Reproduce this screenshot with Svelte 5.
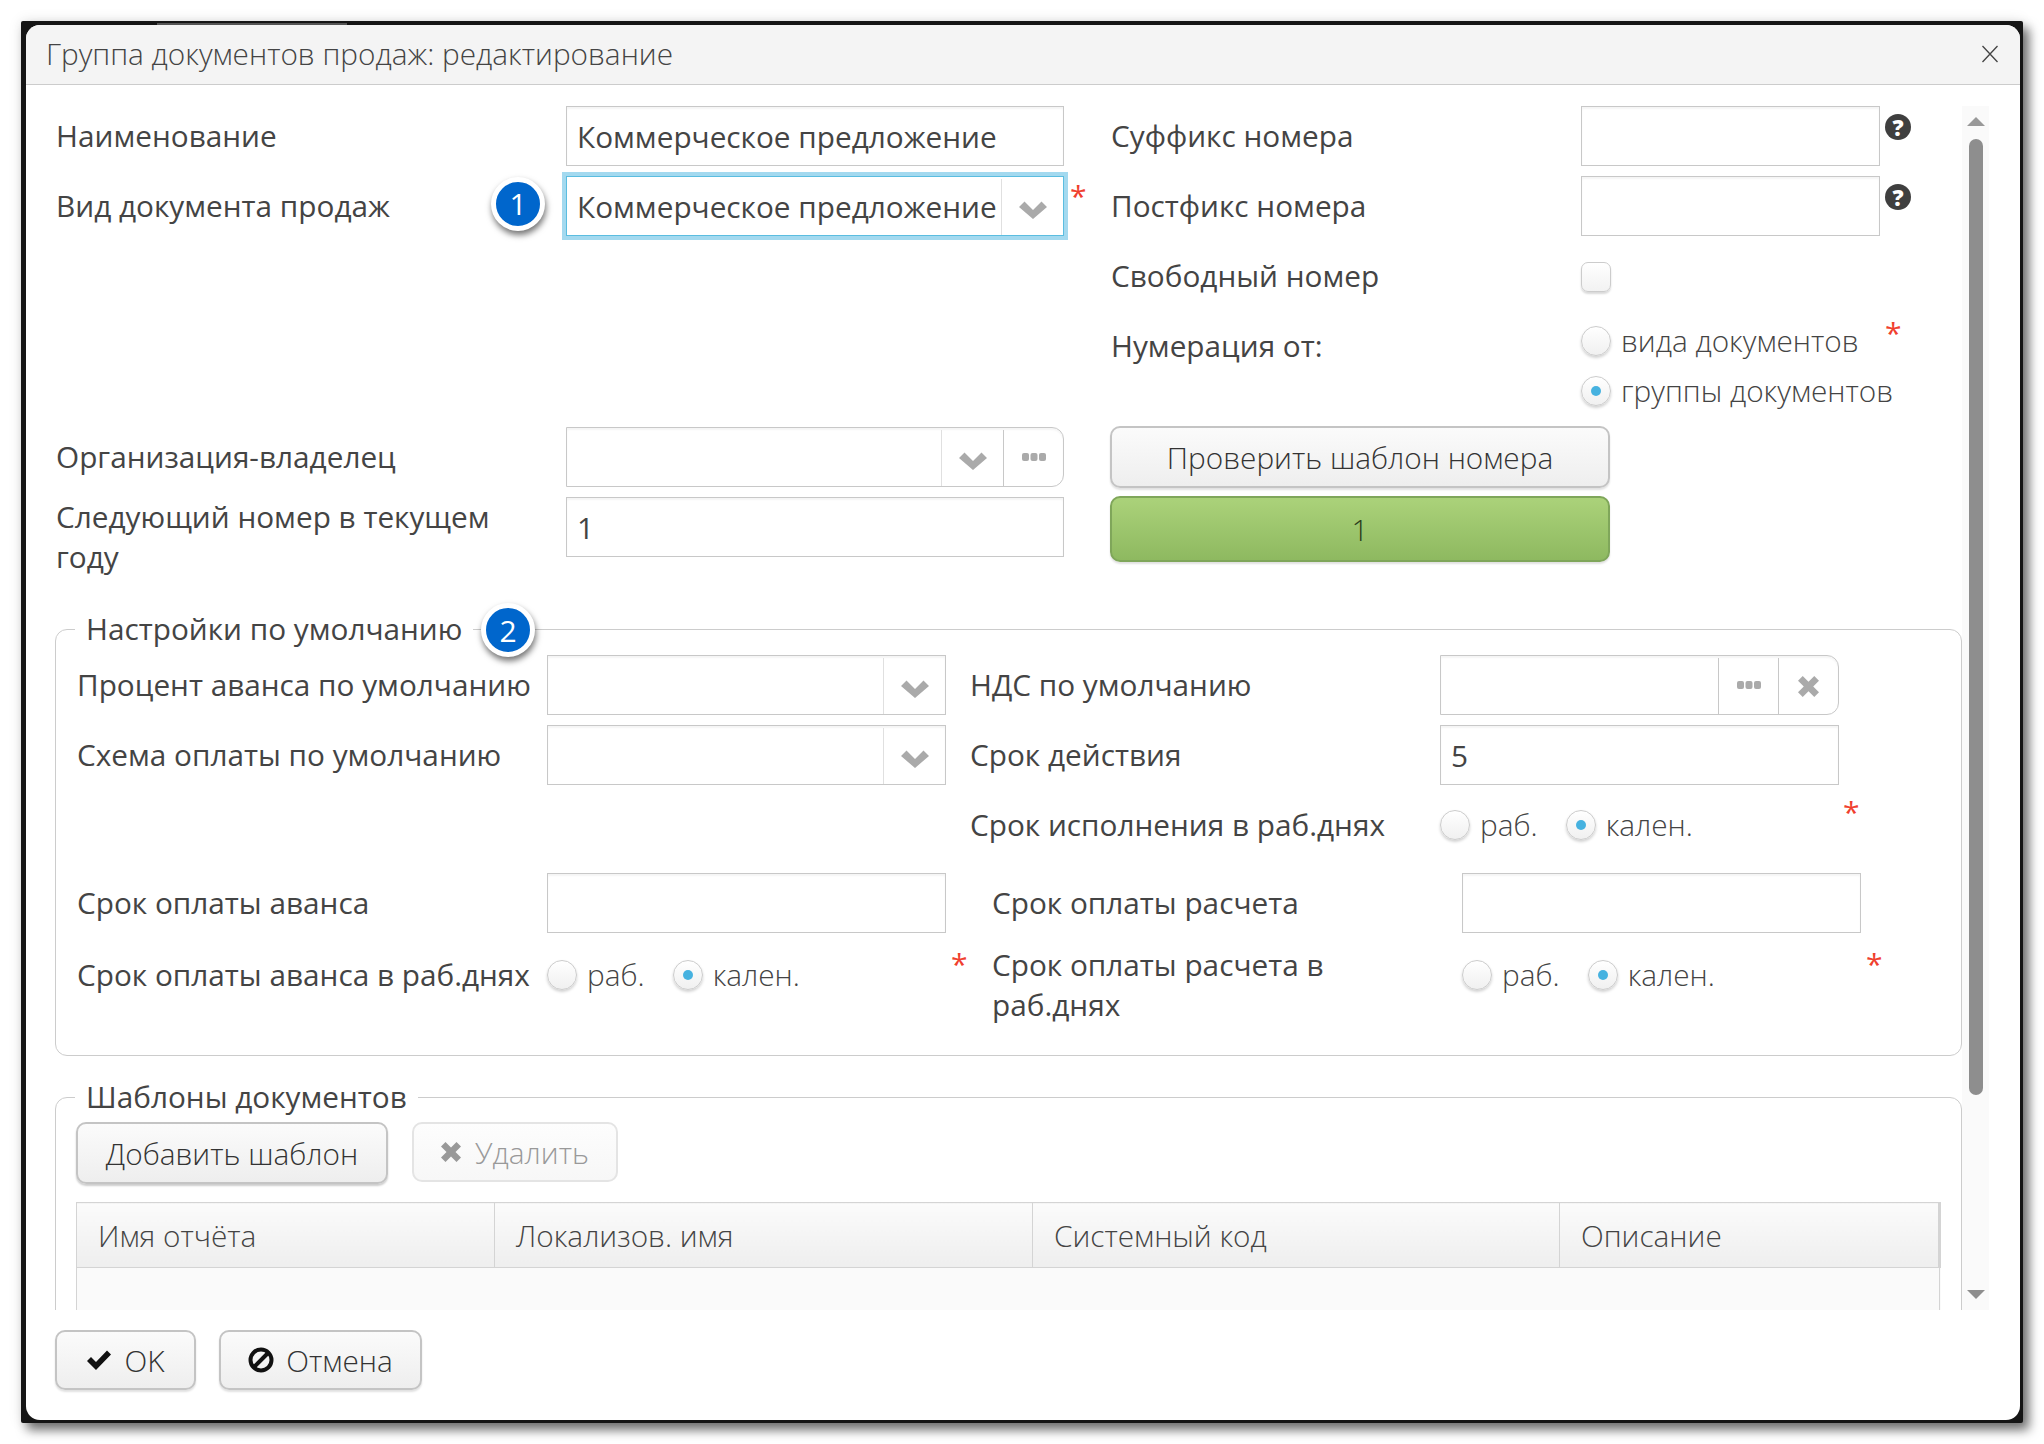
<script>
	const columns = [
		{ title: 'Имя отчёта', width: 418 },
		{ title: 'Локализов. имя', width: 538 },
		{ title: 'Системный код', width: 527 },
		{ title: 'Описание', width: 380 }
	];
</script>

{#snippet chevron()}
	<svg class="ico" width="28" height="18" viewBox="0 0 28 18"><path d="M0 6 L5.500 0.500 L14 9 L22.500 0.500 L28 6 L14 18 Z" fill="#aaa" /></svg>
{/snippet}

{#snippet dots()}
	<svg class="ico dots" width="24" height="8" viewBox="0 0 24 8">
		<rect x="0" y="0" width="7" height="8" rx="2" fill="#aaa" />
		<rect x="8.500" y="0" width="7" height="8" rx="2" fill="#aaa" />
		<rect x="17" y="0" width="7" height="8" rx="2" fill="#aaa" />
	</svg>
{/snippet}

{#snippet cross(size, color)}
	<svg class="ico" width={size} height={size} viewBox="0 0 20 20"><path d="M4.500 0 L10 5.500 L15.500 0 L20 4.500 L14.500 10 L20 15.500 L15.500 20 L10 14.500 L4.500 20 L0 15.500 L5.500 10 L0 4.500 Z" fill={color} /></svg>
{/snippet}

{#snippet radio(label, checked)}
	<span class="radio-item">
		<span class="radio" class:checked></span>
		<span class="radio-label">{label}</span>
	</span>
{/snippet}

<div class="frame">
	<div class="dialog">
		<header class="title">
			<span>Группа документов продаж: редактирование</span>
			<svg width="18" height="18" viewBox="0 0 18 18"><path d="M1.500 1 L16.500 17 M16.500 1 L1.500 17" stroke="#444" stroke-width="1.300" fill="none" /></svg>
		</header>

		<div class="body">
			<div class="content">
				<div class="top">
					<div class="top-left">
						<div class="row">
							<div class="label">Наименование</div>
							<div class="field">Коммерческое предложение</div>
						</div>
						<div class="row spaced">
							<div class="label">Вид документа продаж</div>
							<div class="field focused">
								<span class="value">Коммерческое предложение</span>
								<span class="addon">{@render chevron()}</span>
								<span class="badge badge-one">1</span>
								<span class="star star-one">*</span>
							</div>
						</div>
						<div class="row">
							<div class="label">Организация-владелец</div>
							<div class="field round">
								<span class="value"></span>
								<span class="addon wide">{@render chevron()}</span>
								<span class="addon dots-addon">{@render dots()}</span>
							</div>
						</div>
						<div class="row">
							<div class="label two-line">Следующий номер в текущем году</div>
							<div class="field">1</div>
						</div>
					</div>

					<div class="top-right">
						<div class="row">
							<div class="label">Суффикс номера</div>
							<div class="field short"></div>
							<span class="help">?</span>
						</div>
						<div class="row">
							<div class="label">Постфикс номера</div>
							<div class="field short"></div>
							<span class="help">?</span>
						</div>
						<div class="row">
							<div class="label">Свободный номер</div>
							<span class="checkbox"></span>
						</div>
						<div class="row numbering">
							<div class="label">Нумерация от:</div>
							<div class="radio-stack">
								{@render radio('вида документов', false)}
								{@render radio('группы документов', true)}
								<span class="star star-num">*</span>
							</div>
						</div>
						<button class="btn check">Проверить шаблон номера</button>
						<button class="btn green">1</button>
					</div>
				</div>

				<fieldset class="group first">
					<legend>Настройки по умолчанию</legend>
					<span class="badge badge-two">2</span>

					<div class="cols">
						<div class="col">
							<div class="row">
								<div class="label">Процент аванса по умолчанию</div>
								<div class="field inner">
									<span class="value"></span>
									<span class="addon">{@render chevron()}</span>
								</div>
							</div>
							<div class="row">
								<div class="label">Схема оплаты по умолчанию</div>
								<div class="field inner">
									<span class="value"></span>
									<span class="addon">{@render chevron()}</span>
								</div>
							</div>
						</div>
						<div class="col right-a">
							<div class="row">
								<div class="label">НДС по умолчанию</div>
								<div class="field inner round">
									<span class="value"></span>
									<span class="addon small dots-addon">{@render dots()}</span>
									<span class="addon small clear">{@render cross(21, '#aaa')}</span>
								</div>
							</div>
							<div class="row">
								<div class="label">Срок действия</div>
								<div class="field inner">5</div>
							</div>
							<div class="row">
								<div class="label">Срок исполнения в раб.днях</div>
								<div class="radio-row">
									{@render radio('раб.', false)}
									{@render radio('кален.', true)}
									<span class="star star-a">*</span>
								</div>
							</div>
						</div>
					</div>

					<div class="cols lower">
						<div class="col">
							<div class="row">
								<div class="label">Срок оплаты аванса</div>
								<div class="field inner"></div>
							</div>
							<div class="row">
								<div class="label">Срок оплаты аванса в раб.днях</div>
								<div class="radio-row">
									{@render radio('раб.', false)}
									{@render radio('кален.', true)}
									<span class="star star-b">*</span>
								</div>
							</div>
						</div>
						<div class="col right-b">
							<div class="row">
								<div class="label">Срок оплаты расчета</div>
								<div class="field inner"></div>
							</div>
							<div class="row">
								<div class="label two-line">Срок оплаты расчета в раб.днях</div>
								<div class="radio-row">
									{@render radio('раб.', false)}
									{@render radio('кален.', true)}
									<span class="star star-b">*</span>
								</div>
							</div>
						</div>
					</div>
				</fieldset>

				<fieldset class="group second">
					<legend>Шаблоны документов</legend>
					<div class="toolbar">
						<button class="btn add">Добавить шаблон</button>
						<button class="btn remove">{@render cross(20, '#999')}<span>Удалить</span></button>
					</div>
					<table>
						<thead>
							<tr>
								{#each columns as c}
									<th style="width: {c.width}px">{c.title}</th>
								{/each}
							</tr>
						</thead>
						<tbody>
							<tr><td colspan="4"></td></tr>
						</tbody>
					</table>
				</fieldset>
			</div>

			<div class="scrollbar">
				<span class="arrow up"></span>
				<span class="thumb"></span>
				<span class="arrow down"></span>
			</div>
		</div>

		<footer class="footer">
			<button class="btn ok">
				<svg width="26" height="22" viewBox="0 0 26 22"><path d="M1 12 L5 8 L10 13 L21 1.500 L25 5.500 L10 21 Z" fill="#111" /></svg>
				<span>OK</span>
			</button>
			<button class="btn cancel">
				<svg width="26" height="26" viewBox="0 0 26 26"><circle cx="13" cy="13" r="10.500" fill="none" stroke="#111" stroke-width="4" /><path d="M6 20 L20 6" stroke="#111" stroke-width="4" /></svg>
				<span>Отмена</span>
			</button>
		</footer>
	</div>
</div>

<style>
	:global(body) {
		background: #fff;
		font-family: "Open Sans", sans-serif;
		font-size: 29.750px;
		color: #444;
	}

	.frame {
		box-sizing: border-box;
		width: 2002px;
		height: 1402px;
		margin: 21px;
		background: linear-gradient(#555, #555) 136px 2px / 190px 2px no-repeat, #151515;
		padding: 4px 3px 3px 5px;
		box-shadow: 6px 7px 11px rgba(0, 0, 0, 0.55), 0 0 14px rgba(0, 0, 0, 0.1);
		border-radius: 2px;
	}

	.dialog {
		height: 100%;
		background: #fff;
		border-radius: 14px;
		overflow: hidden;
		display: flex;
		flex-direction: column;
	}

	.title {
		flex: none;
		box-sizing: border-box;
		height: 60px;
		display: flex;
		align-items: center;
		justify-content: space-between;
		padding: 0 21px 2px 20px;
		background: #f4f4f4;
		border-bottom: 1px solid #ccc;
		font-weight: 300;
	}

	.body {
		flex: none;
		height: 1225px;
		display: flex;
		overflow: hidden;
	}

	.content {
		width: 1936px;
		flex: none;
		box-sizing: border-box;
		padding: 21px 0 0 29px;
		overflow: hidden;
	}

	.top {
		display: flex;
		margin-left: 1px;
		height: 503px;
	}

	.top-left {
		width: 1055px;
		flex: none;
	}

	.row {
		display: flex;
		margin-bottom: 10px;
		min-height: 60px;
	}

	.row.spaced {
		margin-bottom: 191px;
	}

	.label {
		flex: none;
		width: 510px;
		line-height: 40px;
		padding-top: 10px;
		box-sizing: border-box;
	}

	.label.two-line {
		width: 470px;
		margin-right: 40px;
		padding-top: 0;
	}

	.field {
		position: relative;
		box-sizing: border-box;
		width: 498px;
		height: 60px;
		flex: none;
		display: flex;
		align-items: center;
		padding: 2px 0 0 10px;
		border: 1px solid #c8c8c8;
		box-shadow: inset 0 2px 2px #f5f5f5;
		line-height: 1;
		background: #fff;
	}

	.field.focused {
		border-color: #5bbde0;
		outline: 4px solid #a3d9ef;
		outline-offset: 0;
		box-shadow: none;
	}

	.field.round {
		border-radius: 0 12px 12px 0;
	}

	.value {
		flex: 1;
		min-width: 0;
		white-space: nowrap;
	}

	.addon {
		flex: none;
		width: 62px;
		height: 100%;
		display: flex;
		align-items: center;
		justify-content: center;
		border-left: 1px solid #e0e0e0;
		padding-top: 5px;
		box-sizing: border-box;
	}

	.addon.dots-addon {
		width: 60px;
		align-items: flex-start;
		padding-top: 23px;
		border-left-color: #c8c8c8;
	}

	.addon.small {
		width: 60px;
		border-left-color: #c8c8c8;
	}

	.addon.clear {
		padding-top: 0;
	}

	.ico {
		display: block;
	}

	.star {
		position: absolute;
		color: #f0402e;
		font-size: 30px;
		line-height: 1;
		font-weight: 400;
	}

	.star-one {
		left: 503px;
		top: 4px;
	}

	.star-num {
		left: 304px;
		top: 2px;
	}

	.star-a {
		left: 403px;
		top: 2px;
	}

	.star-b {
		left: 404px;
		top: 4px;
	}

	.badge {
		position: absolute;
		box-sizing: border-box;
		width: 54px;
		height: 54px;
		border-radius: 50%;
		background: #0066cc;
		border: 5px solid #fff;
		color: #fff;
		display: flex;
		align-items: center;
		justify-content: center;
		font-size: 30px;
		box-shadow: 1px 4px 6px rgba(0, 0, 0, 0.55);
	}

	.badge-one {
		left: -76px;
		top: 0;
	}

	.badge-two {
		left: 425px;
		top: -46px;
	}

	.top-right {
		flex: none;
		width: 840px;
	}

	.top-right .label {
		width: 470px;
	}

	.field.short {
		width: 299px;
	}

	.help {
		flex: none;
		width: 26px;
		height: 26px;
		margin: 8px 0 0 5px;
		border-radius: 50%;
		background: #3f3f3f;
		color: #fff;
		font-size: 22px;
		font-weight: 800;
		line-height: 26px;
		text-align: center;
	}

	.checkbox {
		box-sizing: border-box;
		width: 30px;
		height: 30px;
		margin-top: 16px;
		border: 1px solid #ccc;
		border-radius: 7px;
		background: linear-gradient(#fff, #f2f2f2);
		box-shadow: 0 2px 2px rgba(0, 0, 0, 0.15);
	}

	.numbering {
		margin-bottom: 0;
	}

	.numbering .label {
		padding-top: 10px;
	}

	.radio-stack {
		position: relative;
		display: flex;
		flex-direction: column;
		padding-top: 10px;
		height: 100px;
	}

	.radio-stack .radio-item {
		height: 51px;
		align-items: flex-start;
	}

	.radio-item {
		display: inline-flex;
		align-items: center;
		white-space: nowrap;
	}

	.radio {
		box-sizing: border-box;
		width: 30px;
		height: 30px;
		flex: none;
		border: 1px solid #ccc;
		border-radius: 50%;
		background: linear-gradient(#fff, #f0f0f0);
		box-shadow: 0 2px 3px rgba(0, 0, 0, 0.18);
		position: relative;
	}

	.radio.checked::after {
		content: '';
		position: absolute;
		left: 9px;
		top: 9px;
		width: 10px;
		height: 10px;
		border-radius: 50%;
		background: #46b2e0;
	}

	.radio-label {
		margin-left: 10px;
		font-weight: 300;
		line-height: 30px;
	}

	.radio-row {
		position: relative;
		display: flex;
		align-items: center;
		gap: 28px;
		height: 60px;
		flex: none;
	}

	.btn {
		box-sizing: border-box;
		font-family: inherit;
		font-size: 29.750px;
		font-weight: 300;
		color: #333;
		border: 2px solid #c4c4c4;
		border-radius: 10px;
		background: linear-gradient(#fbfbfb, #eeeeee);
		box-shadow: 0 2px 2px rgba(0, 0, 0, 0.12);
		display: flex;
		align-items: center;
		justify-content: center;
		gap: 12px;
		padding: 0;
	}

	.check {
		width: 500px;
		height: 62px;
		margin-left: -1px;
	}

	.green {
		width: 500px;
		height: 66px;
		margin: 8px 0 0 -1px;
		background: linear-gradient(#abd27a, #8eb960);
		border-color: #7fa65a;
		color: #2c3d1e;
	}

	.group {
		position: relative;
		margin: 0;
		padding: 6px 21px 0;
		border: 1px solid #ccc;
		border-radius: 12px;
		min-width: 0;
		box-sizing: border-box;
		width: 1907px;
	}

	legend {
		margin-left: -2px;
		padding: 0 11px;
		line-height: 40px;
	}

	.first {
		height: 447px;
	}

	.second {
		margin-top: 21px;
		height: 400px;
		padding-top: 5px;
	}

	.cols {
		display: flex;
		height: 218px;
	}

	.cols.lower {
		height: auto;
	}

	.lower .row:first-child {
		margin-bottom: 12px;
	}

	.col {
		flex: none;
		width: 893px;
	}

	.col .label {
		width: 470px;
	}

	.col .label.two-line {
		width: 360px;
		margin-right: 110px;
		padding-top: 0;
	}

	.field.inner {
		width: 399px;
	}

	.right-b {
		margin-left: 22px;
	}

	.toolbar {
		display: flex;
		gap: 24px;
		height: 80px;
		margin-left: -1px;
	}

	.add {
		width: 312px;
		height: 62px;
		box-shadow: 0 2px 2px rgba(0, 0, 0, 0.2);
	}

	.remove {
		width: 206px;
		height: 60px;
		gap: 14px;
		color: #999;
		border-color: #e4e4e4;
		background: linear-gradient(#fdfdfd, #f7f7f7);
		box-shadow: none;
	}

	table {
		border-collapse: collapse;
		table-layout: fixed;
		width: 1863px;
		margin-left: -1px;
		background: #fafafa;
	}

	th {
		box-sizing: border-box;
		height: 65px;
		padding: 0 0 0 21px;
		text-align: left;
		font-weight: 300;
		color: #444;
		background: linear-gradient(#fbfbfb, #eeeeee);
		border: 1px solid #d4d4d4;
	}

	th:last-child {
		border-right-width: 3px;
	}

	td {
		height: 90px;
		border: 1px solid #d4d4d4;
	}

	.scrollbar {
		flex: none;
		width: 27px;
		margin-top: 21px;
		background: #fafafa;
		display: flex;
		flex-direction: column;
		align-items: center;
	}

	.arrow {
		width: 0;
		height: 0;
		border-left: 9px solid transparent;
		border-right: 9px solid transparent;
	}

	.arrow.up {
		margin-top: 11px;
		border-bottom: 9px solid #999;
	}

	.arrow.down {
		margin-top: 195px;
		border-top: 9px solid #8e8e8e;
	}

	.thumb {
		width: 14px;
		height: 956px;
		margin-top: 13px;
		background: #8e8e8e;
		border-radius: 7px;
	}

	.footer {
		flex: 1;
		display: flex;
		gap: 23px;
		padding: 20px 0 0 29px;
	}

	.ok,
	.cancel {
		height: 60px;
	}

	.ok {
		width: 141px;
	}

	.cancel {
		width: 203px;
	}
</style>
